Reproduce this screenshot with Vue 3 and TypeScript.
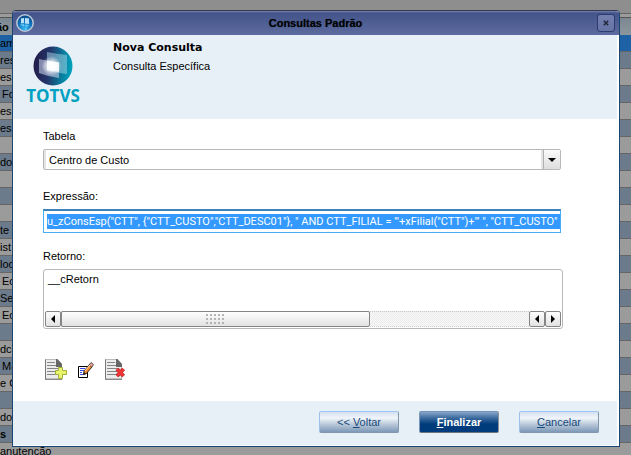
<script setup lang="ts">
import { ref } from 'vue'

interface Row {
  text: string
  inset?: boolean
  bold?: boolean
}

const rows: Row[] = [
  { text: 'am' }, { text: 'res' }, { text: 'es' }, { text: 'Fo', inset: true }, { text: 'es' },
  { text: 'es' }, { text: '' }, { text: 'dor' }, { text: '' }, { text: '' },
  { text: '' }, { text: 'te' }, { text: 'ist' }, { text: 'loc' }, { text: 'Ec', inset: true },
  { text: 'Ser' }, { text: 'Ec', inset: true }, { text: '' }, { text: 'dci' }, { text: 'Ma', inset: true },
  { text: 'e C' }, { text: '' }, { text: 'do' }, { text: 's', bold: true }, { text: 'anutenção' },
]

const tabela = ref('Centro de Custo')
const expressao = ref('u_zConsEsp("CTT", {"CTT_CUSTO","CTT_DESC01"}, " AND CTT_FILIAL = \'"+xFilial("CTT")+"\' ", "CTT_CUSTO"')
const retorno = ref('__cRetorn')
</script>

<template>
  <main class="desktop">
    <table class="backdrop">
      <thead>
        <tr><th>ão</th></tr>
      </thead>
      <tbody>
        <tr v-for="(row, i) in rows" :key="i" :class="{ selected: i === 0 }">
          <td :class="{ inset: row.inset, bold: row.bold }">{{ row.text }}</td>
        </tr>
      </tbody>
    </table>

    <section class="dialog" role="dialog" aria-labelledby="dialog-title">
      <header class="titlebar">
        <svg class="app-icon" viewBox="0 0 18 18" aria-hidden="true">
          <defs>
            <radialGradient id="orb" cx="50%" cy="85%" r="80%">
              <stop offset="0" stop-color="#35b8f2" />
              <stop offset="0.6" stop-color="#1170b8" />
              <stop offset="1" stop-color="#0b4a8c" />
            </radialGradient>
          </defs>
          <circle cx="9" cy="9" r="8.2" fill="url(#orb)" stroke="#b9c6d6" stroke-width="1.5" />
          <path d="M5 4.5 8 4v5l-3 .5zM9 4l4 .5V10L9 9.5z" fill="#b7e2fa" />
          <path d="M4 10.500 8 10v2.500l-2-.5zM9 10.500l4 .5-2 2-2-.5z" fill="#5fc2f2" />
          <path d="M9 14.500h2l-1 1.500z" fill="#9ce2ff" />
        </svg>
        <h1 id="dialog-title">Consultas Padrão</h1>
        <button class="close" type="button" aria-label="Fechar">
          <svg viewBox="0 0 6 6" aria-hidden="true">
            <path d="M.8.8l4.400 4.400M5.200.8.8 5.200" stroke="#22283c" stroke-width="1.600" />
          </svg>
        </button>
      </header>

      <div class="banner">
        <div class="brand">
          <svg viewBox="0 0 40 40" aria-hidden="true">
            <defs>
              <linearGradient id="globe" x1="0" y1=".45" x2="1" y2=".55">
                <stop offset="0" stop-color="#241b49" />
                <stop offset=".4" stop-color="#23376b" />
                <stop offset=".75" stop-color="#087f9f" />
                <stop offset="1" stop-color="#00a4bf" />
              </linearGradient>
              <radialGradient id="shine" cx="47%" cy="50%" r="50%">
                <stop offset="0" stop-color="#fff" />
                <stop offset=".35" stop-color="#fff" stop-opacity=".85" />
                <stop offset="1" stop-color="#fff" stop-opacity="0" />
              </radialGradient>
            </defs>
            <circle cx="20" cy="20" r="19.500" fill="url(#globe)" />
            <path d="M14 6q10 2 20 3v19q-9-1-20-3z" fill="#a9d8e8" opacity=".5" />
            <path d="M6 13q10 2 20 3.500V32Q16 31 6 27z" fill="#d3dcf0" opacity=".55" />
            <path d="M14 14.500l12 2V26l-12-2z" fill="#fff" opacity=".8" />
            <circle cx="19" cy="20" r="10" fill="url(#shine)" />
          </svg>
          <span>TOTVS</span>
        </div>
        <div class="heading">
          <h2>Nova Consulta</h2>
          <p>Consulta Específica</p>
        </div>
      </div>

      <form id="consulta" class="body" @submit.prevent>
        <div class="field">
          <label for="tabela">Tabela</label>
          <div class="combo">
            <select id="tabela" v-model="tabela">
              <option>Centro de Custo</option>
            </select>
            <span class="drop" aria-hidden="true">
              <svg viewBox="0 0 8 4"><path d="M0 0h8L4 4z" /></svg>
            </span>
          </div>
        </div>

        <div class="field">
          <label for="expressao">Expressão:</label>
          <input id="expressao" v-model="expressao" class="expression" type="text" />
        </div>

        <div class="field">
          <label for="retorno">Retorno:</label>
          <div class="result">
            <textarea id="retorno" v-model="retorno" wrap="off"></textarea>
            <div class="scrollbar">
              <button type="button" aria-label="Rolar para a esquerda">
                <svg viewBox="0 0 4 8"><path d="M4 0v8L0 4z" /></svg>
              </button>
              <div class="track">
                <div class="thumb">
                  <svg viewBox="0 0 18 10" aria-hidden="true">
                    <path d="M0 1h18M0 5h18M0 9h18" stroke="#b4b4b4" stroke-width="2" stroke-dasharray="2 2" />
                  </svg>
                </div>
              </div>
              <button type="button" aria-label="Rolar para a esquerda">
                <svg viewBox="0 0 4 8"><path d="M4 0v8L0 4z" /></svg>
              </button>
              <button type="button" aria-label="Rolar para a direita">
                <svg viewBox="0 0 4 8"><path d="M0 0v8l4-4z" /></svg>
              </button>
            </div>
          </div>
        </div>

        <div class="tools">
          <button type="button" aria-label="Incluir">
            <svg class="doc" viewBox="0 0 22 21">
              <path d="M.5.500h11l5 4.500v15H.5z" fill="#ececec" stroke="#bbb" />
              <path d="M.5 20V.5M0 20.300h17" stroke="#777" fill="none" />
              <path d="M11 0h1.500L17 5v3h-6z" fill="#666" />
              <path d="M2 3.500h8M2 6.500h9M2 9.500h12M2 12.500h10M2 15.500h12" stroke="#858585" />
              <path d="M13.500 8.500h4v3h4v4h-4v4h-4v-4h-3v-4h3z" fill="#e6f56c" stroke="#a3ad37" />
            </svg>
          </button>
          <button type="button" aria-label="Editar">
            <svg class="pen" viewBox="0 0 16 16">
              <path d="M.5 4.500h9v11h-9z" fill="#fff" stroke="#000" />
              <path d="M2 6.500h5M2 8.500h4M2 10.500h2M2 12.500h3" stroke="#3a46dc" />
              <path d="M5.500 12.500l.5-3.500L11.500 2.500 14 5 8.500 11.500z" fill="#f28a32" stroke="#111" stroke-width=".8" />
              <path d="M11 3 13 .5 15.500 2.500 13.800 5.200z" fill="#e9a59b" stroke="#333" stroke-width=".8" />
              <path d="M7 9l5-6" stroke="#ffe3bd" />
              <path d="M5 13l1-3 2 2z" fill="#222" />
            </svg>
          </button>
          <button type="button" aria-label="Excluir">
            <svg class="doc" viewBox="0 0 22 21">
              <path d="M.5.500h11l5 4.500v15H.5z" fill="#ececec" stroke="#bbb" />
              <path d="M.5 20V.5M0 20.300h17" stroke="#777" fill="none" />
              <path d="M11 0h1.500L17 5v3h-6z" fill="#666" />
              <path d="M2 3.500h8M2 6.500h9M2 9.500h12M2 12.500h10M2 15.500h12" stroke="#858585" />
              <path d="M12 10l6.500 7M18.500 10 12 17" stroke="#a72b2b" stroke-width="4" />
              <path d="M12 10l6.500 7M18.500 10 12 17" stroke="#ef3535" stroke-width="2.600" />
            </svg>
          </button>
        </div>
      </form>

      <footer class="actions">
        <button type="button">&lt;&lt; <u>V</u>oltar</button>
        <button type="submit" form="consulta" class="primary"><u>F</u>inalizar</button>
        <button type="button"><u>C</u>ancelar</button>
      </footer>
    </section>
  </main>
</template>

<style>
body {
  margin: 0;
}
</style>

<style scoped>
* {
  box-sizing: border-box;
}

.desktop {
  position: relative;
  height: 100vh;
  min-height: 440px;
  overflow: hidden;
  padding-top: 13px;
  background: #8e8e8e;
  color: #000;
  font: 11px/14px "Liberation Sans", Arial, sans-serif;
}

button,
input,
select,
textarea {
  margin: 0;
  border: 0;
  border-radius: 0;
  outline: 0;
  font: inherit;
  color: inherit;
}

button {
  padding: 0;
}

svg {
  display: block;
}

.backdrop {
  width: 100%;
  border-collapse: separate;
  border-spacing: 0;
  table-layout: fixed;
  border-top: 1px solid #666;
  padding-top: 3px;
  background: #9b9b9b;
}

.backdrop th {
  height: 18px;
  padding: 0;
  border-top: 1px solid #555;
  background: linear-gradient(#7b8791, #8d969d);
  text-align: left;
  text-indent: -4px;
}

.backdrop td {
  height: 17px;
  padding: 0;
  border-bottom: 1px solid #666;
  background: #9b9b9b;
  white-space: nowrap;
}

.backdrop tr:nth-child(even) td {
  background: #6b7b8c;
}

.backdrop .selected td {
  background: #1e62a5;
}

.backdrop .inset {
  padding-left: 2px;
}

.backdrop .bold {
  font-weight: bold;
}

.dialog {
  position: absolute;
  inset: 10px 11px 8px 12px;
  display: flex;
  flex-direction: column;
  border: 1px solid #1b4674;
  border-top-color: #343a4c;
  border-radius: 4px 4px 0 0;
  background: #fff;
  overflow: hidden;
}

.titlebar {
  display: grid;
  grid-template-columns: 18px 1fr 18px;
  align-items: center;
  height: 24px;
  flex: none;
  padding: 0 4px 0 3px;
  background: linear-gradient(#7984b0 0, #43548a 2px, #5d6b9e);
}

.app-icon {
  width: 18px;
  height: 18px;
}

.titlebar h1 {
  margin: 0;
  font-size: 11px;
  line-height: 14px;
  text-align: center;
  text-shadow: 0 0 1px #26304f;
}

.close {
  display: grid;
  place-items: center;
  width: 18px;
  height: 18px;
  border: 1px solid #2c3b70;
  border-radius: 3px;
  background: linear-gradient(#7380b0, #6572a4);
}

.close svg {
  width: 6px;
  height: 6px;
}

.banner {
  display: flex;
  flex: none;
  height: 84px;
  margin-right: 2px;
  background: #e8f0f7;
}

.brand {
  display: flex;
  flex-direction: column;
  align-items: center;
  width: 80px;
  padding-top: 11px;
}

.brand svg {
  width: 40px;
  height: 40px;
}

.brand span {
  color: #00a0c0;
  font: bold 17px/20px "Open Sans", "Noto Sans", sans-serif;
}

.heading {
  padding: 6px 0 0 20px;
}

.heading h2 {
  margin: 0 0 4px;
  font: bold 11px/14px "DejaVu Sans", Verdana, sans-serif;
}

.heading p {
  margin: 0;
}

.body {
  display: flex;
  flex: 1;
  flex-direction: column;
  padding: 10px 58px 0 30px;
}

.field {
  display: flex;
  flex-direction: column;
  gap: 6px;
  min-height: 60px;
}

.combo {
  display: flex;
  width: 100%;
  height: 21px;
  border: 1px solid #b8b8b8;
  border-radius: 2px;
  background: #fff;
}

.combo select {
  flex: 1;
  min-width: 0;
  padding: 0 3px;
  border-left: 2px solid #e4e4e4;
  border-right: 2px solid #e4e4e4;
  appearance: none;
  background: #fff;
}

.drop {
  display: grid;
  place-items: center;
  width: 17px;
  border-left: 1px solid #b0b0b0;
  background: linear-gradient(#fafafa, #dedede);
  pointer-events: none;
}

.drop svg {
  width: 8px;
  height: 4px;
}

.expression {
  width: 100%;
  height: 24px;
  padding: 3px 0 3px 3px;
  border: 1px solid #45aef5;
  border-top: 2px solid #3d82b8;
  background: linear-gradient(#39f, #39f) content-box, #fff;
  color: #fff;
  font-family: Roboto, "Liberation Sans", sans-serif;
}

.result {
  display: flex;
  flex-direction: column;
  height: 60px;
  margin-right: -2px;
  padding: 1px;
  border: 1px solid #b8b8b8;
  border-radius: 3px;
  background: #fff;
}

.result textarea {
  flex: 1;
  min-height: 0;
  padding: 1px 3px;
  overflow: hidden;
  resize: none;
  background: #fff;
}

.scrollbar {
  display: flex;
  height: 16px;
}

.scrollbar button,
.thumb {
  display: grid;
  place-items: center;
  border: 1px solid #858585;
  border-radius: 2px;
  background: linear-gradient(#fefefe, #e2e2e2);
}

.scrollbar button {
  width: 16px;
}

.scrollbar button svg {
  width: 4px;
  height: 8px;
}

.track {
  flex: 1;
  border: dotted #ccc;
  border-width: 1px 0;
  background: repeating-conic-gradient(#eaeaea 0 25%, #fafafa 0 50%) 0 0 / 2px 2px;
}

.thumb {
  width: 66%;
  height: 16px;
  margin-top: -1px;
}

.thumb svg {
  width: 18px;
  height: 10px;
}

.tools {
  display: flex;
  align-items: center;
  gap: 11px;
  margin-top: 30px;
  padding-left: 2px;
}

.tools button {
  background: none;
}

.doc {
  width: 22px;
  height: 21px;
}

.pen {
  width: 16px;
  height: 16px;
}

.actions {
  display: flex;
  flex: none;
  justify-content: flex-end;
  gap: 20px;
  margin: 0 2px 1px 0;
  padding: 10px 18px 12px;
  background: #e8f0f7;
}

.actions button {
  width: 80px;
  height: 22px;
  border: 1px solid #8296b0;
  border-top-color: #9cc6f4;
  border-left-color: #9cc0e8;
  border-radius: 2px;
  background: linear-gradient(#d3e0ee, #f1f5fa 30%, #bccadb 60%, #7d99b8);
  color: #174a7a;
}

.actions .primary {
  border-color: #7294ba #8b8f96 #6c7480 #7c96b5;
  background: linear-gradient(#88a6c8, #3d6b9e 30%, #003c7c 60%, #003c7c);
  color: #fff;
  font-weight: bold;
}
</style>
